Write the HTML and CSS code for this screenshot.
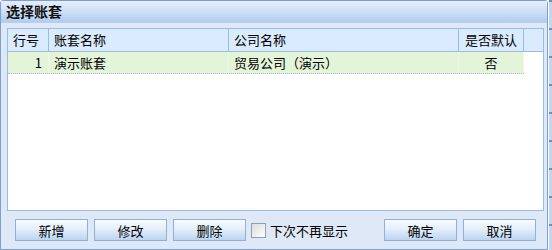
FILE: index.html
```html
<!DOCTYPE html>
<html>
<head>
  <title>选择账套</title>
  <link rel="stylesheet" href="styles.css">
</head>
<body>
  <div class="screen">
    <div class="window">
      <div class="title">选择账套</div>
      <div class="body">
        <div class="grid">
          <div class="row head">
            <div class="cell c-no">行号</div>
            <div class="cell c-name">账套名称</div>
            <div class="cell c-corp">公司名称</div>
            <div class="cell c-def">是否默认</div>
            <div class="cell c-fill"></div>
          </div>
          <div class="row data">
            <div class="cell c-no num">1</div>
            <div class="cell c-name">演示账套</div>
            <div class="cell c-corp">贸易公司（演示）</div>
            <div class="cell c-def center">否</div>
          </div>
        </div>
        <div class="toolbar">
          <button class="btn">新增</button>
          <button class="btn">修改</button>
          <button class="btn">删除</button>
          <label class="check"><span class="box"></span>下次不再显示</label>
          <div class="spacer"></div>
          <button class="btn">确定</button>
          <button class="btn">取消</button>
        </div>
      </div>
    </div>
    <div class="edge"></div>
  </div>
</body>
</html>
```
FILE: styles.css
```css
/* dialog styles */

body {
  margin: 0;
  font-family: "Noto Sans CJK SC", "DejaVu Sans", sans-serif;
  font-size: 13px;
  color: #000;
  background: #fff;
}

.screen {
  display: flex;
  width: 552px;
  height: 250px;
}

.window {
  width: 548px;
  height: 248px;
  border: 1px solid #7c9fcb;
  border-radius: 3px 3px 0 0;
  background: #dfe8f6;
  display: flex;
  flex-direction: column;
}

.edge {
  width: 3px;
  margin-left: 1px;
  background: repeating-linear-gradient(#6d8fb9 0 2px, #c5d5ea 2px 28px);
}

.title {
  height: 21px;
  line-height: 21px;
  padding-left: 5px;
  font-size: 14px;
  font-weight: bold;
  color: #111;
  background: linear-gradient(#e4eefa, #cddff5 50%, #b0cdee);
  border-bottom: 1px solid #b9cfea;
}

.body {
  flex: 1;
  display: flex;
  flex-direction: column;
  padding: 5px 3px 0 6px;
}

.grid {
  height: 181px;
  border: 1px solid #99bbe8;
  background: #fff;
}

.row {
  display: flex;
  height: 22px;
}

.head {
  background: #d9ebfc;
  border-bottom: 1px solid #99bbe8;
}

.data {
  width: 516px;
  height: 21px;
  background: #e3f4d9;
  border-bottom: 1px dotted #a9b8c8;
}

.cell {
  line-height: 22px;
  padding-left: 5px;
  box-sizing: border-box;
  white-space: nowrap;
}

.data .cell {
  line-height: 21px;
}

.head .cell {
  border-right: 1px solid #99bbe8;
}

.data .cell {
  border-right: 1px solid #eef5e9;
}

.c-no { width: 41px; }
.c-name { width: 180px; }
.c-corp { width: 230px; }
.c-def { width: 65px; text-align: center; padding-left: 0; }
.head .c-fill { flex: 1; border-right: 0; }

.num {
  text-align: right;
  padding-right: 6px;
}

.center {
  text-align: center;
}

.toolbar {
  display: flex;
  align-items: center;
  height: 38px;
  padding-left: 8px;
  padding-right: 8px;
}

.btn {
  width: 73px;
  height: 22px;
  margin-right: 6px;
  padding: 0;
  font-family: inherit;
  font-size: 13px;
  color: #000;
  border: 1px solid #8eb0da;
  background: linear-gradient(#f7fbff, #e4eefa 45%, #bad5f1);
}

.check {
  display: flex;
  align-items: center;
  margin-left: -1px;
}

.box {
  width: 13px;
  height: 13px;
  margin-right: 4px;
  border: 1px solid #8f9fb4;
  background: linear-gradient(135deg, #dcdcdc, #fff);
}

.spacer {
  flex: 1;
}

.toolbar .btn:last-child {
  margin-right: 0;
}
```
